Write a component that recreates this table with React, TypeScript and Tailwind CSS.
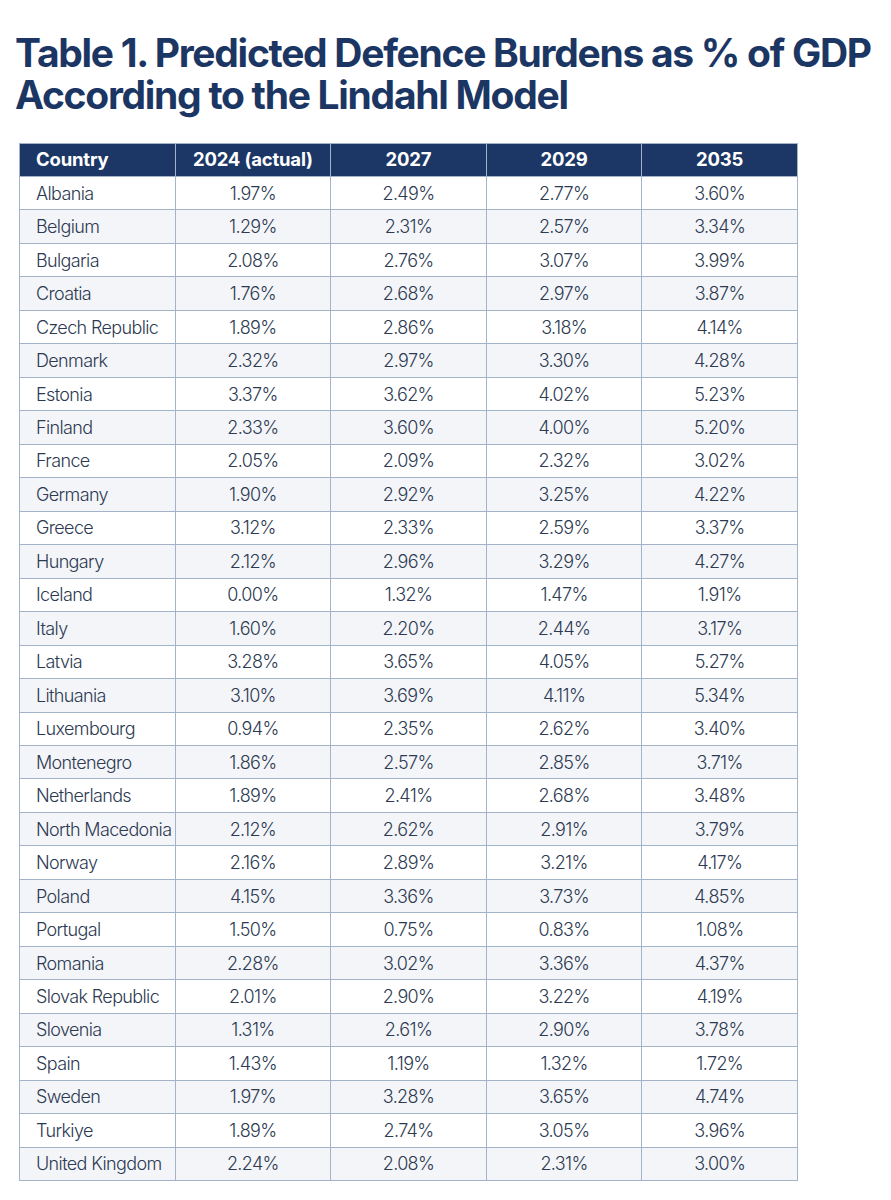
const rows: [string, string, string, string, string][] = [
  ['Albania', '1.97%', '2.49%', '2.77%', '3.60%'],
  ['Belgium', '1.29%', '2.31%', '2.57%', '3.34%'],
  ['Bulgaria', '2.08%', '2.76%', '3.07%', '3.99%'],
  ['Croatia', '1.76%', '2.68%', '2.97%', '3.87%'],
  ['Czech Republic', '1.89%', '2.86%', '3.18%', '4.14%'],
  ['Denmark', '2.32%', '2.97%', '3.30%', '4.28%'],
  ['Estonia', '3.37%', '3.62%', '4.02%', '5.23%'],
  ['Finland', '2.33%', '3.60%', '4.00%', '5.20%'],
  ['France', '2.05%', '2.09%', '2.32%', '3.02%'],
  ['Germany', '1.90%', '2.92%', '3.25%', '4.22%'],
  ['Greece', '3.12%', '2.33%', '2.59%', '3.37%'],
  ['Hungary', '2.12%', '2.96%', '3.29%', '4.27%'],
  ['Iceland', '0.00%', '1.32%', '1.47%', '1.91%'],
  ['Italy', '1.60%', '2.20%', '2.44%', '3.17%'],
  ['Latvia', '3.28%', '3.65%', '4.05%', '5.27%'],
  ['Lithuania', '3.10%', '3.69%', '4.11%', '5.34%'],
  ['Luxembourg', '0.94%', '2.35%', '2.62%', '3.40%'],
  ['Montenegro', '1.86%', '2.57%', '2.85%', '3.71%'],
  ['Netherlands', '1.89%', '2.41%', '2.68%', '3.48%'],
  ['North Macedonia', '2.12%', '2.62%', '2.91%', '3.79%'],
  ['Norway', '2.16%', '2.89%', '3.21%', '4.17%'],
  ['Poland', '4.15%', '3.36%', '3.73%', '4.85%'],
  ['Portugal', '1.50%', '0.75%', '0.83%', '1.08%'],
  ['Romania', '2.28%', '3.02%', '3.36%', '4.37%'],
  ['Slovak Republic', '2.01%', '2.90%', '3.22%', '4.19%'],
  ['Slovenia', '1.31%', '2.61%', '2.90%', '3.78%'],
  ['Spain', '1.43%', '1.19%', '1.32%', '1.72%'],
  ['Sweden', '1.97%', '3.28%', '3.65%', '4.74%'],
  ['Turkiye', '1.89%', '2.74%', '3.05%', '3.96%'],
  ['United Kingdom', '2.24%', '2.08%', '2.31%', '3.00%'],
];

const headers = ['Country', '2024 (actual)', '2027', '2029', '2035'];

export default function App() {
  return (
    <div className="min-h-[1200px] bg-white font-['Inter',sans-serif]">
      <h1 className="pt-[32px] pl-[15px] text-[39px] leading-[42px] font-bold tracking-[-0.033em] text-[#1c3664]">
        Table 1. Predicted Defence Burdens as % of GDP
        <br />
        According to the Lindahl Model
      </h1>

      <table className="mt-[27px] ml-[19px] w-[779px] table-fixed border-collapse">
        <thead>
          <tr className="h-[33px] bg-[#1c3765]">
            {headers.map((h, i) => (
              <th
                key={h}
                className={`border border-[#a3b4ca] text-[18.5px] font-bold tracking-[-0.01em] text-white ${
                  i === 0 ? 'pl-[16px] text-left' : 'text-center'
                }`}
              >
                {h}
              </th>
            ))}
          </tr>
        </thead>
        <tbody>
          {rows.map((r, idx) => (
            <tr key={r[0]} className={`h-[33.47px] ${idx % 2 === 1 ? 'bg-[#f4f5f9]' : 'bg-white'}`}>
              {r.map((c, i) => (
                <td
                  key={i}
                  className={`border border-[#a3b4ca] text-[18px] font-light tracking-[-0.035em] text-[#2c3a52] whitespace-nowrap ${
                    i === 0 ? 'pl-[16px] text-left' : 'text-center'
                  }`}
                >
                  {c}
                </td>
              ))}
            </tr>
          ))}
        </tbody>
      </table>
    </div>
  );
}
